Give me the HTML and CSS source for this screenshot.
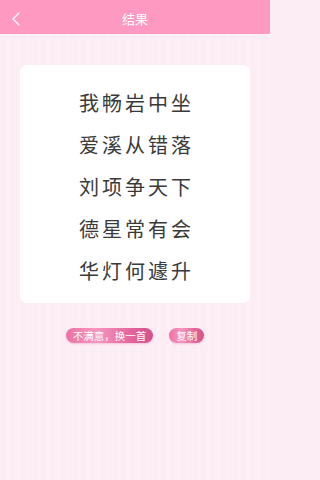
FILE: index.html
```html
<!DOCTYPE html>
<html lang="zh-CN">
<head>
<meta charset="utf-8">
<title>结果</title>
<link rel="stylesheet" href="styles.css">
</head>
<body>
<div class="page">
  <header class="topbar">
    <span class="back">
      <svg width="10" height="14" viewBox="0 0 10 14"><path d="M8 1 L2 7 L8 13" fill="none" stroke="#fff" stroke-width="1.4" stroke-linecap="round" stroke-linejoin="round"/></svg>
    </span>
    <h1 class="title">结果</h1>
  </header>
  <main class="content">
    <section class="card">
      <p class="line">我畅岩中坐</p>
      <p class="line">爱溪从错落</p>
      <p class="line">刘项争天下</p>
      <p class="line">德星常有会</p>
      <p class="line">华灯何遽升</p>
    </section>
    <div class="actions">
      <button class="btn btn-wide">不满意，换一首</button>
      <button class="btn btn-small">复制</button>
    </div>
  </main>
</div>
</body>
</html>
```

FILE: styles.css
```css
* { box-sizing: border-box; }
html, body {
  margin: 0;
  padding: 0;
}
html {
  background: #fcedf4;
}
body {
  width: 270px;
  height: 480px;
  font-family: "Noto Sans CJK SC", "Noto Sans", sans-serif;
  background-color: #fcedf4;
  background-image: repeating-linear-gradient(90deg, rgba(255,255,255,0) 0px, rgba(255,255,255,0) 7px, rgba(255,255,255,0.14) 7px, rgba(255,255,255,0.14) 10px);
  overflow: hidden;
}
.page {
  height: 480px;
  display: flex;
  flex-direction: column;
}
.topbar {
  position: relative;
  height: 35px;
  padding-top: 4px;
  background: #fe99c1;
  border-bottom: 1px solid #fdf3f7;
  display: flex;
  align-items: center;
  justify-content: center;
}
.back {
  position: absolute;
  left: 11px;
  top: 12px;
  width: 10px;
  height: 14px;
  display: flex;
}
.title {
  margin: 0;
  font-size: 13px;
  font-weight: 400;
  color: #fff;
  line-height: 16px;
}
.content {
  padding: 30px 20px 0;
}
.card {
  background: #fff;
  border-radius: 7px;
  padding: 17px 0 11px;
  text-align: center;
}
.line {
  margin: 0;
  font-size: 20px;
  line-height: 42px;
  letter-spacing: 3px;
  padding-left: 3px;
  color: #3a3a3a;
}
.actions {
  margin-top: 25px;
  display: flex;
  justify-content: center;
  gap: 16px;
}
.btn {
  border: 0;
  margin: 0;
  height: 15px;
  border-radius: 8px;
  font-family: inherit;
  font-size: 10.5px;
  line-height: 15px;
  color: #fff;
  background: linear-gradient(90deg, #ec72a2 0%, #f597bf 35%, #e66aa0 70%, #d4508a 100%);
  box-shadow: 0 1px 2px rgba(210, 80, 140, 0.25);
}
.btn-wide { padding: 0 7px; }
.btn-small { padding: 0 7px; }
```
